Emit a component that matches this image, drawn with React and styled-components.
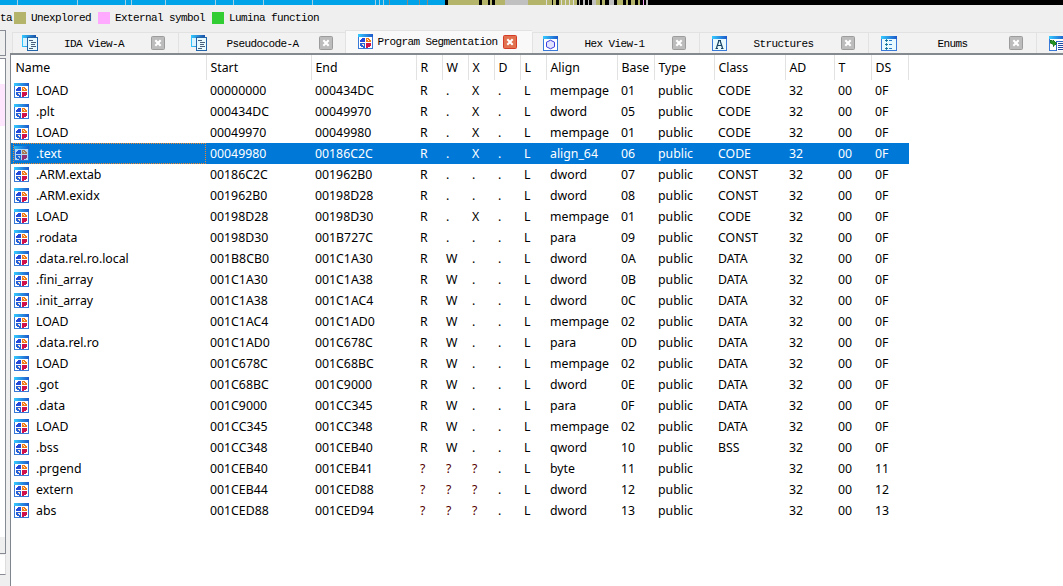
import React from 'react';
import styled, { createGlobalStyle } from 'styled-components';

const Global = createGlobalStyle`
  * { box-sizing: border-box; }
  body { margin: 0; background: #efefef; overflow: hidden; }
`;

const Window = styled.div`
  width: 1063px;
  height: 586px;
  overflow: hidden;
  display: flex;
  flex-direction: column;
  background: #efefef;
  color: #000;
  font-family: "Noto Sans", "Open Sans", sans-serif;
  font-size: 12.3px;
`;

const NavBand = styled.svg`
  display: block;
  flex: none;
`;

const Legend = styled.div`
  height: 25px;
  flex: none;
  display: flex;
  align-items: center;
  white-space: pre;
  font: 11px/12px "Liberation Mono", monospace;
  letter-spacing: -0.6px;
`;

const LegendLabel = styled.span`
  width: ${(p) => p.$w}px;
`;

const Swatch = styled.i`
  width: 12px;
  height: 12px;
  margin-right: 5px;
  background: ${(p) => p.$c};
`;

const Body = styled.div`
  flex: 1;
  min-height: 0;
  display: flex;
`;

const SideDock = styled.div`
  width: 6px;
  margin-right: 4px;
  flex: none;
  display: flex;
  flex-direction: column;
`;

const SideTitle = styled.div`
  height: 26px;
  margin-bottom: 2px;
  border: solid #868b94;
  border-width: 1px 1px 1px 0;
`;

const SideList = styled.div`
  height: 496px;
  border: solid #868b94;
  border-width: 1px 1px 1px 0;
  background: linear-gradient(#fff 0 25px, #ffe6ff 25px 67px, #fff 67px 478px, #efefef 478px);
`;

const SideFilter = styled.div`
  height: 20px;
  margin-top: 1px;
  background: #fff;
  border-bottom: 1px solid #868b94;
  border-right: 1px solid #ddd;
`;

const Main = styled.div`
  flex: 1;
  min-width: 0;
  display: flex;
  flex-direction: column;
`;

const TabBar = styled.div`
  height: 23px;
  flex: none;
  display: flex;
  align-items: flex-end;
  padding-left: 2px;
`;

const TabBox = styled.div`
  width: ${(p) => p.$w}px;
  height: ${(p) => (p.$active ? 24 : 21)}px;
  margin-bottom: ${(p) => (p.$active ? -1 : 0)}px;
  flex: none;
  display: flex;
  align-items: center;
  padding: ${(p) => (p.$active ? '0 15px 2px 12px' : `0 ${p.$end || 13}px 0 ${p.$pad}px`)};
  border: solid #e2e2e2;
  border-width: 1px 0 0 1px;
  background: ${(p) => (p.$active ? '#f9f9f9' : '#f2f2f2')};
  overflow: hidden;
`;

const TabTitle = styled.span`
  flex: 1;
  padding: 1px 1px 0 0;
  text-align: center;
  white-space: pre;
  font: 11px/12px "Liberation Mono", monospace;
  letter-spacing: -0.6px;
`;

const Panel = styled.div`
  flex: 1;
  border: solid #82878f;
  border-width: 2px 0 0 1px;
  border-top-color: #858a91;
  background: #fff;
`;

const COLS = '195px 105px 105px 26px 26px 26px 26px 26px 71px 37px 60px 71px 49px 37px 37px';

const HeaderRow = styled.div`
  display: grid;
  grid-template-columns: ${COLS};
  width: 898px;
  height: 25px;
  line-height: 25px;
`;

const HeaderCell = styled.div`
  margin-right: -1px;
  padding-left: 4.5px;
  border-right: 1px solid #e2e2e2;
  white-space: nowrap;
`;

const Row = styled.div`
  display: grid;
  grid-template-columns: ${COLS};
  width: 898px;
  height: 21px;
  line-height: 21px;
  color: ${(p) => (p.$on ? '#fff' : '#000')};
  background: ${(p) => (p.$on ? '#0078d7' : 'transparent')};
`;

const Cell = styled.div`
  padding-left: 4px;
  color: ${(p) => (p.$unknown ? '#500' : 'inherit')};
  white-space: nowrap;
`;

const NameCell = styled.div`
  display: flex;
  align-items: center;
  gap: 7px;
  height: 21px;
  margin-left: 2px;
  border: ${(p) => (p.$on ? '1px dotted #f08728' : '1px solid transparent')};
  line-height: 19px;
  svg { opacity: ${(p) => (p.$on ? 0.7 : 1)}; flex: none; }
`;

function Frame({ children, w = 15, fill = '#fff' }) {
  return (
    <svg width={w} height="15" viewBox={`0 0 ${w} 15`} shapeRendering="crispEdges">
      <defs>
        <linearGradient id="cap"><stop stopColor="#35cbff" /><stop offset="1" stopColor="#1d58c9" /></linearGradient>
      </defs>
      <rect width={w} height="15" fill="#3979d8" />
      <rect width={w} height="3" fill="url(#cap)" />
      <rect x="1" y="3" width={w - 2} height="11" fill={fill} />
      {children}
    </svg>
  );
}

function SegIcon() {
  return (
    <Frame>
      <path d="M4 4h3v4H2V6h1V5h1z" fill="#2448d8" />
      <path d="M8 4h3v1h1v1h1v2H8z" fill="#f07a16" />
      <path d="M2 9h5v5H5v-1H3v-1H2z" fill="#2860d8" />
      <path d="M8 9h5v3h-1v1h-2v1H8z" fill="#d0124c" />
      <path d="M4 10h2v1H4zM5 11h1v1H5zM9 5h1v1H9zM10 6h1v1h-1z" fill="#ffe6d0" />
    </Frame>
  );
}

function ViewIcon() {
  return (
    <svg width="16" height="16" viewBox="0 0 16 16" shapeRendering="crispEdges">
      <defs><linearGradient id="view"><stop stopColor="#32c8ff" /><stop offset="1" stopColor="#1c4fa8" /></linearGradient></defs>
      <path d="M0 0h14v12H0z" fill="url(#view)" />
      <path d="M1 3h11v8H1z" fill="#d9f4ff" />
      <path d="M5 2h11v14H5z" fill="#2365a8" />
      <path d="M6 3h9v12H6z" fill="#e9faff" />
      <path d="M7 5.500h4M9 7.500h5M9 9.500h4M9 11.500h5M7 13.500h4" stroke="#48607c" />
    </svg>
  );
}

function HexIcon() {
  return (
    <Frame><path d="M7.500 4.200 11.500 6.200v4.600l-4 2-4-2V6.200Z" fill="#e2e4ff" stroke="#3c3ce0" shapeRendering="auto" /></Frame>
  );
}

function StructIcon() {
  return (
    <Frame fill="#e8faff">
      <path d="M6 4.500h3M6.800 5 4.500 12M8.200 5l2.300 7M5.500 9.500h4M3.500 12.500h2.500M9 12.500h2.500" fill="none" stroke="#164264" strokeWidth="1.200" shapeRendering="auto" />
    </Frame>
  );
}

function EnumIcon() {
  return (
    <Frame w={16} fill="#e8faff">
      <path d="M5.500 3v11" stroke="#2090b0" strokeDasharray="1 1" />
      <path d="M4 4.500h3M4 8.500h3M4 12.500h3" stroke="#1d6f9c" />
      <path d="M8 4.500h3M8 8.500h3M8 12.500h3" stroke="#2478c8" />
    </Frame>
  );
}

function ImportIcon() {
  return (
    <Frame w={16}>
      <path d="M7 5h9v10H7z" fill="#3068c8" />
      <path d="M8 6h8v9H8z" fill="#fff" />
      <path d="M9 7.500h6M9 9.500h6M9 11.500h6M9 13.500h6" stroke="#2048a0" />
      <path d="M1 4l3 1V3.500l4 4-4 3V8.500L1 7z" fill="#249324" stroke="#16601c" strokeWidth=".5" />
    </Frame>
  );
}

function Close({ active }) {
  return (
    <svg width="14" height="14" viewBox="0 0 14 14">
      <rect x=".5" y=".5" width="13" height="13" rx="1" fill={active ? '#e2714f' : '#bcbcbc'} stroke={active ? '#d43c28' : '#9c9c9c'} />
      <path d="M4.300 4.300l5.400 5.400M9.700 4.300 4.300 9.700" stroke="#fff" strokeWidth="2.100" />
    </svg>
  );
}

const TABS = [
  { title: 'IDA View-A', w: 166, pad: 9, icon: <ViewIcon /> },
  { title: 'Pseudocode-A', w: 167, pad: 12, end: 12, icon: <ViewIcon /> },
  { title: 'Program Segmentation', w: 187, active: true, icon: <SegIcon /> },
  { title: 'Hex View-1', w: 167, pad: 10, icon: <HexIcon /> },
  { title: 'Structures', w: 169, pad: 12, icon: <StructIcon /> },
  { title: 'Enums', w: 168, pad: 12, icon: <EnumIcon /> },
  { title: '', w: 168, pad: 12, icon: <ImportIcon /> },
];

const HEAD = ['Name', 'Start', 'End', 'R', 'W', 'X', 'D', 'L', 'Align', 'Base', 'Type', 'Class', 'AD', 'T', 'DS'];

const ROWS = `LOAD|00000000|000434DC|R|.|X|.|L|mempage|01|public|CODE|32|00|0F
.plt|000434DC|00049970|R|.|X|.|L|dword|05|public|CODE|32|00|0F
LOAD|00049970|00049980|R|.|X|.|L|mempage|01|public|CODE|32|00|0F
.text|00049980|00186C2C|R|.|X|.|L|align_64|06|public|CODE|32|00|0F
.ARM.extab|00186C2C|001962B0|R|.|.|.|L|dword|07|public|CONST|32|00|0F
.ARM.exidx|001962B0|00198D28|R|.|.|.|L|dword|08|public|CONST|32|00|0F
LOAD|00198D28|00198D30|R|.|X|.|L|mempage|01|public|CODE|32|00|0F
.rodata|00198D30|001B727C|R|.|.|.|L|para|09|public|CONST|32|00|0F
.data.rel.ro.local|001B8CB0|001C1A30|R|W|.|.|L|dword|0A|public|DATA|32|00|0F
.fini_array|001C1A30|001C1A38|R|W|.|.|L|dword|0B|public|DATA|32|00|0F
.init_array|001C1A38|001C1AC4|R|W|.|.|L|dword|0C|public|DATA|32|00|0F
LOAD|001C1AC4|001C1AD0|R|W|.|.|L|mempage|02|public|DATA|32|00|0F
.data.rel.ro|001C1AD0|001C678C|R|W|.|.|L|para|0D|public|DATA|32|00|0F
LOAD|001C678C|001C68BC|R|W|.|.|L|mempage|02|public|DATA|32|00|0F
.got|001C68BC|001C9000|R|W|.|.|L|dword|0E|public|DATA|32|00|0F
.data|001C9000|001CC345|R|W|.|.|L|para|0F|public|DATA|32|00|0F
LOAD|001CC345|001CC348|R|W|.|.|L|mempage|02|public|DATA|32|00|0F
.bss|001CC348|001CEB40|R|W|.|.|L|qword|10|public|BSS|32|00|0F
.prgend|001CEB40|001CEB41|?|?|?|.|L|byte|11|public||32|00|11
extern|001CEB44|001CED88|?|?|?|.|L|dword|12|public||32|00|12
abs|001CED88|001CED94|?|?|?|.|L|dword|13|public||32|00|13`.split('\n').map((r) => r.split('|'));

// [x, width, colour] runs of the navigation band
const RUNS = [
  [0, 445, '#00a2e8'],
  ...[17, 77, 125, 131, 165, 215, 233, 263, 312, 375, 379, 383].map((x) => [x, 1, '#a8cfe0']),
  ...[389, 407, 419, 427].map((x) => [x, 1, '#8a8a80']),
  [448, 31, '#b4b46a'], [482, 6, '#b4b46a'], [490, 2, '#b4b46a'], [495, 10, '#b4b46a'],
  [505, 23, '#c0c0c0'], [528, 18, '#b4b46a'], [546, 1, '#ddd'], [547, 5, '#b4b46a'], [553, 3, '#b4b46a'],
  [559, 18, '#b4b46a'], ...[561, 565, 569, 573].map((x) => [x, 1, '#ddd']),
  [579, 1, '#c0c0c0'], [583, 2, '#c0c0c0'], [588, 1, '#c0c0c0'], [592, 4, '#c0c0c0'], [596, 4, '#b4b46a'],
  [602, 3, '#b4b46a'], [609, 5, '#c0c0c0'], [617, 6, '#b4b46a'], [626, 2, '#b4b46a'], [631, 4, '#b4b46a'],
  [638, 2, '#b4b46a'], [643, 1, '#ffaaff'], [646, 2, '#c0c0c0'],
];

export default function App() {
  return (
    <Window>
      <Global />
      <NavBand width="1063" height="5" shapeRendering="crispEdges">
        <rect width="1063" height="5" fill="#000" />
        {RUNS.map(([x, w, c], i) => <rect key={i} x={x} width={w} height="5" fill={c} />)}
      </NavBand>
      <Legend>
        <LegendLabel $w={14}>ta</LegendLabel>
        <Swatch $c="#b4b46a" /><LegendLabel $w={67}>Unexplored</LegendLabel>
        <Swatch $c="#ffaaff" /><LegendLabel $w={97}>External symbol</LegendLabel>
        <Swatch $c="#32cd32" /><LegendLabel $w={100}>Lumina function</LegendLabel>
      </Legend>
      <Body>
        <SideDock><SideTitle /><SideList /><SideFilter /></SideDock>
        <Main>
          <TabBar>
            {TABS.map((t, i) => (
              <TabBox key={i} $w={t.w} $pad={t.pad} $end={t.end} $active={t.active}>
                {t.icon}
                <TabTitle>{t.title}</TabTitle>
                <Close active={t.active} />
              </TabBox>
            ))}
          </TabBar>
          <Panel>
            <HeaderRow>{HEAD.map((h) => <HeaderCell key={h}>{h}</HeaderCell>)}</HeaderRow>
            {ROWS.map((r, i) => (
              <Row key={i} $on={i === 3}>
                <NameCell $on={i === 3}><SegIcon />{r[0]}</NameCell>
                {r.slice(1).map((v, j) => (
                  <Cell key={j} $unknown={v === '?'}>{v}</Cell>
                ))}
              </Row>
            ))}
          </Panel>
        </Main>
      </Body>
    </Window>
  );
}
